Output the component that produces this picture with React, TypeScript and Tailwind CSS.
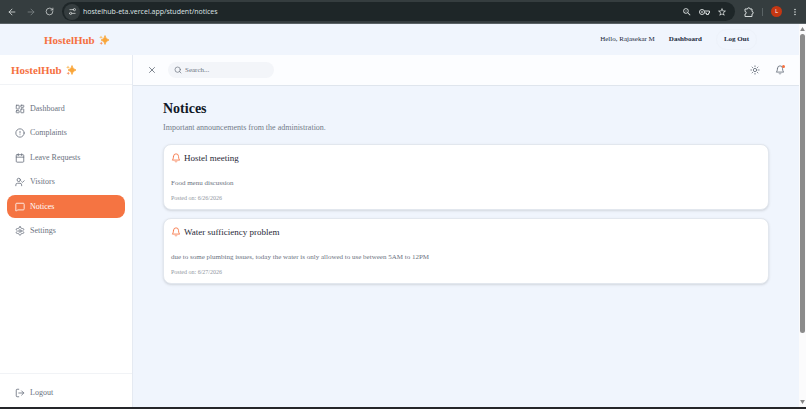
import React from "react";
import {
  ArrowLeft, ArrowRight, RotateCw, Search, LayoutDashboard, CircleAlert,
  Calendar, UserCheck, MessageSquare, LogOut, X, Sun, Settings2,
} from "lucide-react";
import { MdMoreVert, MdStarBorder, MdZoomOut } from "react-icons/md";

type IconProps = { size?: number; className?: string };

function Bell({ size = 10, className }: IconProps) {
  return (
    <svg width={size} height={size} viewBox="0 0 24 24" fill="none" stroke="currentColor" strokeWidth="2" strokeLinecap="round" strokeLinejoin="round" className={className} aria-hidden="true">
      <path d="M6 8a6 6 0 0 1 12 0c0 7 3 9 3 9H3s3-2 3-9" />
      <path d="M10.300 21a1.940 1.940 0 0 0 3.400 0" />
    </svg>
  );
}

function Gear({ size = 10, className }: IconProps) {
  return (
    <svg width={size} height={size} viewBox="0 0 24 24" fill="none" stroke="currentColor" strokeWidth="2" strokeLinecap="round" strokeLinejoin="round" className={className} aria-hidden="true">
      <path d="M12.22 2h-.44a2 2 0 0 0-2 2v.18a2 2 0 0 1-1 1.73l-.43.25a2 2 0 0 1-2 0l-.15-.08a2 2 0 0 0-2.73.73l-.22.38a2 2 0 0 0 .73 2.73l.15.1a2 2 0 0 1 1 1.72v.51a2 2 0 0 1-1 1.74l-.15.09a2 2 0 0 0-.73 2.73l.22.38a2 2 0 0 0 2.73.73l.15-.08a2 2 0 0 1 2 0l.43.25a2 2 0 0 1 1 1.73V20a2 2 0 0 0 2 2h.44a2 2 0 0 0 2-2v-.18a2 2 0 0 1 1-1.73l.43-.25a2 2 0 0 1 2 0l.15.08a2 2 0 0 0 2.73-.73l.22-.39a2 2 0 0 0-.73-2.73l-.15-.08a2 2 0 0 1-1-1.74v-.5a2 2 0 0 1 1-1.74l.15-.09a2 2 0 0 0 .73-2.73l-.22-.38a2 2 0 0 0-2.73-.73l-.15.08a2 2 0 0 1-2 0l-.43-.25a2 2 0 0 1-1-1.73V4a2 2 0 0 0-2-2z" />
      <circle cx="12" cy="12" r="3" />
    </svg>
  );
}

function KeyIcon() {
  return (
    <svg viewBox="0 0 22 12" className="h-[6px] w-[11px]" fill="none" stroke="currentColor" strokeWidth="2" aria-hidden="true">
      <circle cx="6" cy="6" r="5" />
      <circle cx="6" cy="6" r="1" />
      <path d="M11 4h10v4h-2v3h-4V8h-4" />
    </svg>
  );
}

function PuzzleIcon() {
  return (
    <svg viewBox="0 0 20 20" className="size-[10px]" fill="none" stroke="currentColor" strokeWidth="2" strokeLinejoin="round" aria-hidden="true">
      <path d="M2 4h5a2.500 2.500 0 0 1 5 0h4v5a2.500 2.500 0 0 1 0 5v5H2v-5a2.500 2.500 0 0 0 0-5Z" />
    </svg>
  );
}

const links: { label: string; icon: React.ComponentType<IconProps> }[] = [
  { label: "Dashboard", icon: LayoutDashboard },
  { label: "Complaints", icon: CircleAlert },
  { label: "Leave Requests", icon: Calendar },
  { label: "Visitors", icon: UserCheck },
  { label: "Notices", icon: MessageSquare },
  { label: "Settings", icon: Gear },
];

const notices = [
  { title: "Hostel meeting", body: "Food menu discussion", date: "6/26/2026" },
  {
    title: "Water sufficiency problem",
    body: "due to some plumbing issues, today the water is only allowed to use between 5AM to 12PM",
    date: "6/27/2026",
  },
];

function Sparkles() {
  return (
    <svg viewBox="0 0 20 20" className="size-[10px]" aria-hidden="true">
      <path d="M12 1 Q13 8 20 10 Q13 12 12 19 Q11 12 4 10 Q11 8 12 1Z" fill="#f9a63a" stroke="#f9a63a" strokeWidth="1.500" strokeLinejoin="round" />
      <path d="M4 1 L5 3.500 L8 4.500 L5 5.500 L4 8 L3 5.500 L0 4.500 L3 3.500Z" fill="#fbb95a" />
      <path d="M4.500 13 L5.500 15.500 L8 16.500 L5.500 17.500 L4.500 20 L3.500 17.500 L1 16.500 L3.500 15.500Z" fill="#f98f5a" />
    </svg>
  );
}

function Brand() {
  return (
    <a href="#home" className="flex items-center gap-1 text-[11px] leading-4 font-bold text-[#f5703f]">
      HostelHub
      <Sparkles />
    </a>
  );
}

function BrowserBar() {
  return (
    <div className="flex h-6 shrink-0 items-center border-b border-[#596164] bg-[#353d3f] pl-[7px] pr-[6px] text-[#d5dada]">
      <div className="flex items-center gap-[9px]">
        <button aria-label="Back"><ArrowLeft size={10} /></button>
        <button aria-label="Forward" className="text-[#7b8385]"><ArrowRight size={10} /></button>
        <button aria-label="Reload"><RotateCw size={9} /></button>
      </div>
      <div className="ml-2 flex h-[19px] flex-1 items-center rounded-full bg-[#1e2628] pl-[2px] pr-2">
        <button aria-label="Site information" className="flex size-4 items-center justify-center rounded-full bg-[#353d3f]">
          <Settings2 size={9} className="-scale-x-100" />
        </button>
        <input
          aria-label="Address"
          readOnly
          value="hostelhub-eta.vercel.app/student/notices"
          className="ml-[3px] h-4 min-w-0 flex-1 bg-transparent font-['Open_Sans',sans-serif] text-[7px] text-[#dfe5e5] outline-none"
        />
        <div className="flex items-center gap-[7px]">
          <button aria-label="Zoom"><MdZoomOut size={10} /></button>
          <button aria-label="Passwords"><KeyIcon /></button>
          <button aria-label="Bookmark"><MdStarBorder size={10} /></button>
        </div>
      </div>
      <button aria-label="Extensions" className="ml-[9px]"><PuzzleIcon /></button>
      <span className="ml-2 h-2 w-px bg-[#5a6365]" />
      <button aria-label="Profile" className="ml-2 flex size-[11px] items-center justify-center rounded-full bg-[#c53713] font-['Open_Sans',sans-serif] text-[6px] text-white">L</button>
      <button aria-label="Browser menu" className="ml-2"><MdMoreVert size={10} /></button>
    </div>
  );
}

function TopNav() {
  return (
    <header className="flex h-[31px] shrink-0 items-center justify-between bg-[#f0f5fd] pl-11 pr-[42px]">
      <Brand />
      <nav className="flex items-center text-[7px] text-[#20283a]">
        <span>Hello, Rajasekar M</span>
        <a href="#dashboard" className="ml-[14px] font-bold">Dashboard</a>
        <button className="ml-[14px] rounded-full border border-[#edf2fa] px-[7px] py-1 font-bold">Log Out</button>
      </nav>
    </header>
  );
}

function Sidebar() {
  return (
    <aside className="flex w-[133px] shrink-0 flex-col border-r border-[#e5eaf2] bg-white text-[8px] text-[#6b7280]">
      <div className="flex h-[30px] items-center border-b border-[#f1f3f6] pl-[11px]">
        <Brand />
      </div>
      <nav className="flex-1 px-[7px] pt-3">
        <ul className="flex h-[146px] flex-col justify-between">
          {links.map(({ label, icon: Icon }) => (
            <li key={label}>
              <a
                href={"#" + label}
                className={
                  "flex h-[23px] items-center gap-[5px] rounded-lg px-2 " +
                  (label === "Notices" ? "bg-[#f57442] text-white" : "")
                }
              >
                <Icon size={10} />
                {label}
              </a>
            </li>
          ))}
        </ul>
      </nav>
      <div className="border-t border-[#f1f3f6] px-[7px] pt-2 pb-[3px]">
        <button className="flex h-[22px] items-center gap-[5px] px-2">
          <LogOut size={10} />
          Logout
        </button>
      </div>
    </aside>
  );
}

function Toolbar() {
  return (
    <div className="flex h-[31px] shrink-0 items-center border-b border-[#dfe5ed] bg-[#fcfdff] pl-[14px] pr-[14px] text-[#656d79]">
      <button aria-label="Close sidebar"><X size={10} /></button>
      <label className="ml-[11px] flex h-4 w-[106px] items-center gap-[3px] rounded-full bg-[#f3f5f9] px-[6px]">
        <Search size={8} />
        <input aria-label="Search" placeholder="Search..." className="min-w-0 flex-1 bg-transparent text-[7px] outline-none placeholder:text-[#6b7280]" />
      </label>
      <button aria-label="Change theme" className="ml-auto"><Sun size={10} /></button>
      <button aria-label="Notifications" className="relative ml-[15px]">
        <Bell size={10} />
        <span className="absolute right-0 top-0 size-[3px] rounded-full bg-[#f5703f]" />
      </button>
    </div>
  );
}

function ScrollBar() {
  return (
    <div className="flex w-[7px] shrink-0 flex-col items-center bg-[#fbfbfc] py-[3px] text-[#858585]" aria-hidden="true">
      <svg viewBox="0 0 6 5" className="h-1 w-[5px] shrink-0"><path d="M3 0 6 5H0Z" fill="currentColor" /></svg>
      <div className="mt-[3px] flex-[300] w-[5px] rounded-full bg-[#8b8b8b]" />
      <div className="flex-[67]" />
      <svg viewBox="0 0 6 5" className="h-1 w-[5px] shrink-0"><path d="M0 0H6L3 5Z" fill="currentColor" /></svg>
    </div>
  );
}

export default function App() {
  return (
    <div className="flex h-screen flex-col overflow-hidden border-b-2 border-[#25262a] bg-[#f0f5fd] font-['Liberation_Serif',serif]">
      <BrowserBar />
      <div className="flex min-h-0 flex-1">
        <div className="flex min-w-0 flex-1 flex-col">
          <TopNav />
          <div className="flex min-h-0 flex-1">
            <Sidebar />
            <div className="flex min-w-0 flex-1 flex-col">
              <Toolbar />
              <main className="px-[30px] pt-[13px]">
                <h1 className="text-[14px] leading-5 font-bold text-[#111827]">Notices</h1>
                <p className="mt-[3px] text-[8px] leading-3 text-[#737b88]">Important announcements from the administration.</p>
                <div className="mt-[10px] flex flex-col gap-2">
                  {notices.map((n) => (
                    <article key={n.title} className="rounded-lg border border-[#e2e7ee] bg-white px-[7px] pb-[5px] pt-[7px] shadow-sm">
                      <h2 className="flex items-center gap-[3px] text-[9px] leading-3 text-[#1f2937]">
                        <Bell size={10} className="text-[#f5703f]" />
                        {n.title}
                      </h2>
                      <p className="mt-[13px] text-[7px] leading-3 text-[#6b7280]">{n.body}</p>
                      <p className="mt-1 text-[6px] leading-[11px] text-[#9298a2]">Posted on: {n.date}</p>
                    </article>
                  ))}
                </div>
              </main>
            </div>
          </div>
        </div>
        <ScrollBar />
      </div>
    </div>
  );
}
